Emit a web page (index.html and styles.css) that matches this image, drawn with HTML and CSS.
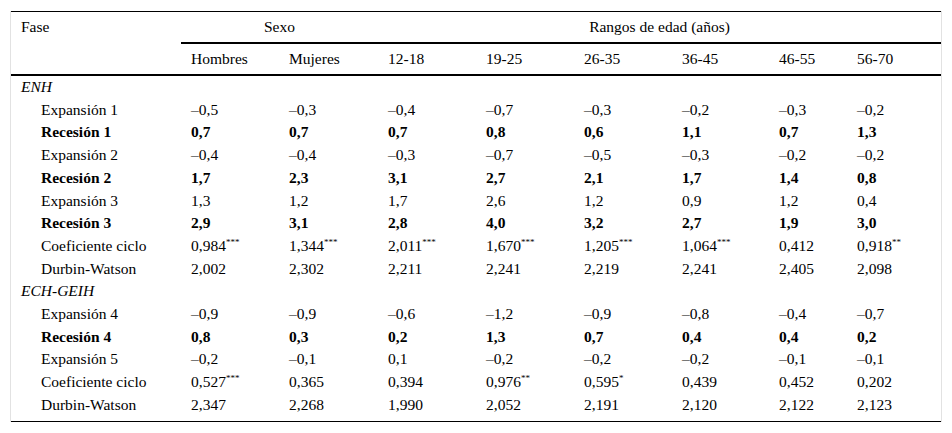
FILE: index.html
```html
<!DOCTYPE html>
<html lang="es">
<head>
<meta charset="utf-8">
<title>Tabla</title>
<link rel="stylesheet" href="styles.css">
</head>
<body>
<div class="frame">
<table class="tbl">
  <colgroup>
    <col class="c-fase">
    <col class="c98"><col class="c99"><col class="c98"><col class="c98"><col class="c98"><col class="c97"><col class="c78"><col class="c94">
  </colgroup>
  <thead>
    <tr class="h1">
      <th rowspan="2" class="fase">Fase</th>
      <th colspan="2" class="grp">Sexo</th>
      <th colspan="6" class="grp">Rangos de edad (años)</th>
    </tr>
    <tr class="h2">
      <th>Hombres</th><th>Mujeres</th><th>12-18</th><th>19-25</th><th>26-35</th><th>36-45</th><th>46-55</th><th>56-70</th>
    </tr>
  </thead>
  <tbody>
    <tr><td class="sec" colspan="9">ENH</td></tr>
    <tr><td class="lbl">Expansión 1</td><td>–0,5</td><td>–0,3</td><td>–0,4</td><td>–0,7</td><td>–0,3</td><td>–0,2</td><td>–0,3</td><td>–0,2</td></tr>
    <tr class="b"><td class="lbl">Recesión 1</td><td>0,7</td><td>0,7</td><td>0,7</td><td>0,8</td><td>0,6</td><td>1,1</td><td>0,7</td><td>1,3</td></tr>
    <tr><td class="lbl">Expansión 2</td><td>–0,4</td><td>–0,4</td><td>–0,3</td><td>–0,7</td><td>–0,5</td><td>–0,3</td><td>–0,2</td><td>–0,2</td></tr>
    <tr class="b"><td class="lbl">Recesión 2</td><td>1,7</td><td>2,3</td><td>3,1</td><td>2,7</td><td>2,1</td><td>1,7</td><td>1,4</td><td>0,8</td></tr>
    <tr><td class="lbl">Expansión 3</td><td>1,3</td><td>1,2</td><td>1,7</td><td>2,6</td><td>1,2</td><td>0,9</td><td>1,2</td><td>0,4</td></tr>
    <tr class="b"><td class="lbl">Recesión 3</td><td>2,9</td><td>3,1</td><td>2,8</td><td>4,0</td><td>3,2</td><td>2,7</td><td>1,9</td><td>3,0</td></tr>
    <tr><td class="lbl">Coeficiente ciclo</td><td>0,984<sup>***</sup></td><td>1,344<sup>***</sup></td><td>2,011<sup>***</sup></td><td>1,670<sup>***</sup></td><td>1,205<sup>***</sup></td><td>1,064<sup>***</sup></td><td>0,412</td><td>0,918<sup>**</sup></td></tr>
    <tr><td class="lbl">Durbin-Watson</td><td>2,002</td><td>2,302</td><td>2,211</td><td>2,241</td><td>2,219</td><td>2,241</td><td>2,405</td><td>2,098</td></tr>
    <tr><td class="sec" colspan="9">ECH-GEIH</td></tr>
    <tr><td class="lbl">Expansión 4</td><td>–0,9</td><td>–0,9</td><td>–0,6</td><td>–1,2</td><td>–0,9</td><td>–0,8</td><td>–0,4</td><td>–0,7</td></tr>
    <tr class="b"><td class="lbl">Recesión 4</td><td>0,8</td><td>0,3</td><td>0,2</td><td>1,3</td><td>0,7</td><td>0,4</td><td>0,4</td><td>0,2</td></tr>
    <tr><td class="lbl">Expansión 5</td><td>–0,2</td><td>–0,1</td><td>0,1</td><td>–0,2</td><td>–0,2</td><td>–0,2</td><td>–0,1</td><td>–0,1</td></tr>
    <tr><td class="lbl">Coeficiente ciclo</td><td>0,527<sup>***</sup></td><td>0,365</td><td>0,394</td><td>0,976<sup>**</sup></td><td>0,595<sup>*</sup></td><td>0,439</td><td>0,452</td><td>0,202</td></tr>
    <tr class="last"><td class="lbl">Durbin-Watson</td><td>2,347</td><td>2,268</td><td>1,990</td><td>2,052</td><td>2,191</td><td>2,120</td><td>2,122</td><td>2,123</td></tr>
  </tbody>
</table>
</div>
</body>
</html>
```
FILE: styles.css
```css
html, body {
  margin: 0;
  padding: 0;
  background: #fff;
}
body {
  padding: 11px 0 0 10px;
  font-family: "Liberation Serif", "Times New Roman", serif;
  font-size: 15.5px;
  color: #000;
}
.frame {
  width: 930px;
  border-left: 1px solid #e2e2e2;
  border-right: 1px solid #e2e2e2;
}
.tbl {
  width: 930px;
  table-layout: fixed;
  border-collapse: separate;
  border-spacing: 0;
  border-top: 1px solid #000;
  border-bottom: 1px solid #000;
}
.c-fase { width: 170px; }
.c98 { width: 98px; }
.c99 { width: 99px; }
.c97 { width: 97px; }
.c78 { width: 78px; }
.c94 { width: 94px; }
th, td {
  padding: 0 0 0 10px;
  text-align: left;
  white-space: nowrap;
  font-weight: normal;
}
thead th {
  height: 30px;
  line-height: 30px;
  border-bottom: 2px solid #000;
}
thead th.fase {
  vertical-align: top;
}
thead th.grp {
  text-align: center;
  padding: 0;
}
td {
  height: 22.7px;
  line-height: 22.7px;
  vertical-align: top;
}
tr.last td {
  padding-bottom: 4px;
}
td.sec {
  font-style: italic;
}
td.lbl {
  padding-left: 30px;
}
tr.b td {
  font-weight: bold;
}
sup {
  font-size: 9px;
  line-height: 0;
  vertical-align: 6px;
}
```
